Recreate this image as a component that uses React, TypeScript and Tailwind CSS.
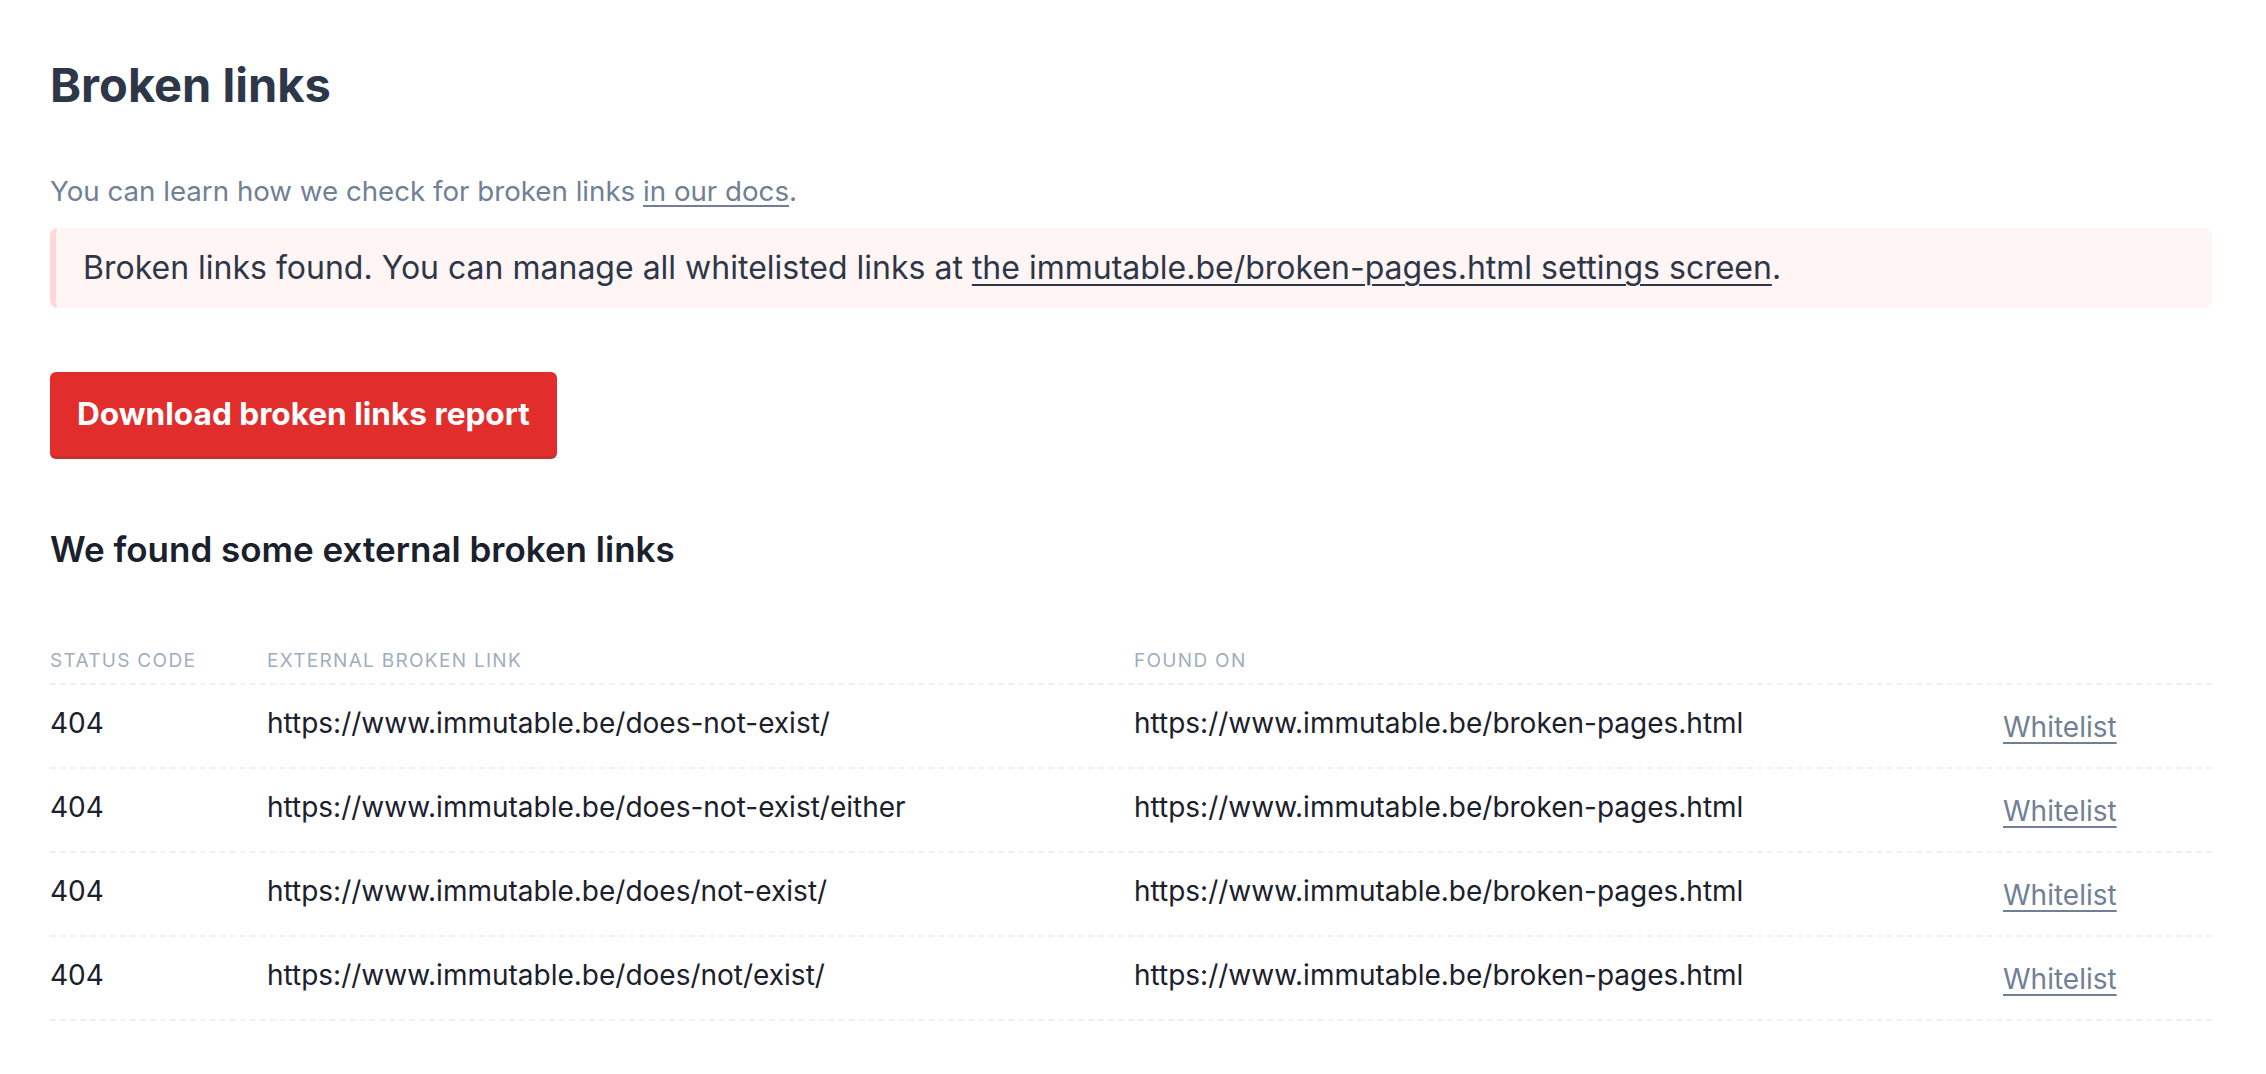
import React from "react";

const rows = [
  { code: "404", link: "https://www.immutable.be/does-not-exist/" },
  { code: "404", link: "https://www.immutable.be/does-not-exist/either" },
  { code: "404", link: "https://www.immutable.be/does/not-exist/" },
  { code: "404", link: "https://www.immutable.be/does/not/exist/" },
];

export default function App() {
  return (
    <div
      className="min-h-[1074px] w-full bg-white pl-[50px] pr-[54px] pt-[57px]"
      style={{ fontFamily: "Inter, 'Noto Sans', sans-serif" }}
    >
      <h1 className="text-[47px] leading-[56px] font-bold text-[#2d3748]">Broken links</h1>

      <p className="mt-[58px] text-[27.7px] leading-[40px] text-[#718096]">
        You can learn how we check for broken links{" "}
        <a className="underline underline-offset-[4px] decoration-[2px]" href="#">
          in our docs
        </a>
        .
      </p>

      <div className="mt-[17px] rounded-[8px] border-l-[6px] border-[#fed7d7] bg-[#fff5f5] py-[18px] pl-[27px] pr-4">
        <p className="text-[32px] leading-[44px] text-[#2d3748]">
          Broken links found. You can manage all whitelisted links at{" "}
          <a className="underline underline-offset-[5px] decoration-[2px]" href="#">
            the immutable.be/broken-pages.html settings screen
          </a>
          .
        </p>
      </div>

      <div className="mt-[64px]">
        <button className="rounded-[6px] border-b-[3px] border-[#c53030] bg-[#e22d2d] px-[27px] pt-[22px] pb-[22px] text-[31.6px] leading-[40px] font-bold text-white">
          Download broken links report
        </button>
      </div>

      <h2 className="mt-[66px] text-[35px] leading-[48px] font-semibold text-[#1a202c]">
        We found some external broken links
      </h2>

      <div className="mt-[75px]">
        <div className="grid grid-cols-[217px_867px_869px_1fr] border-b-2 border-dashed border-[#edf2f7] pb-[9px] text-[19px] leading-[26px] uppercase tracking-[1.3px] text-[#a0aec0]">
          <div>Status code</div>
          <div>External broken link</div>
          <div>Found on</div>
          <div></div>
        </div>
        {rows.map((r, i) => (
          <div
            key={i}
            className="grid grid-cols-[217px_867px_869px_1fr] border-b-2 border-dashed border-[#edf2f7] text-[28px] leading-[40px] text-[#1a202c]"
          >
            <div className="pt-[18px] pb-[24px]">{r.code}</div>
            <div className="pt-[18px] pb-[24px]">{r.link}</div>
            <div className="pt-[18px] pb-[24px]">https://www.immutable.be/broken-pages.html</div>
            <div className="pt-[22px] pb-[20px]">
              <a className="text-[#718096] underline underline-offset-[5px] decoration-[2px]" href="#">
                Whitelist
              </a>
            </div>
          </div>
        ))}
      </div>
    </div>
  );
}
